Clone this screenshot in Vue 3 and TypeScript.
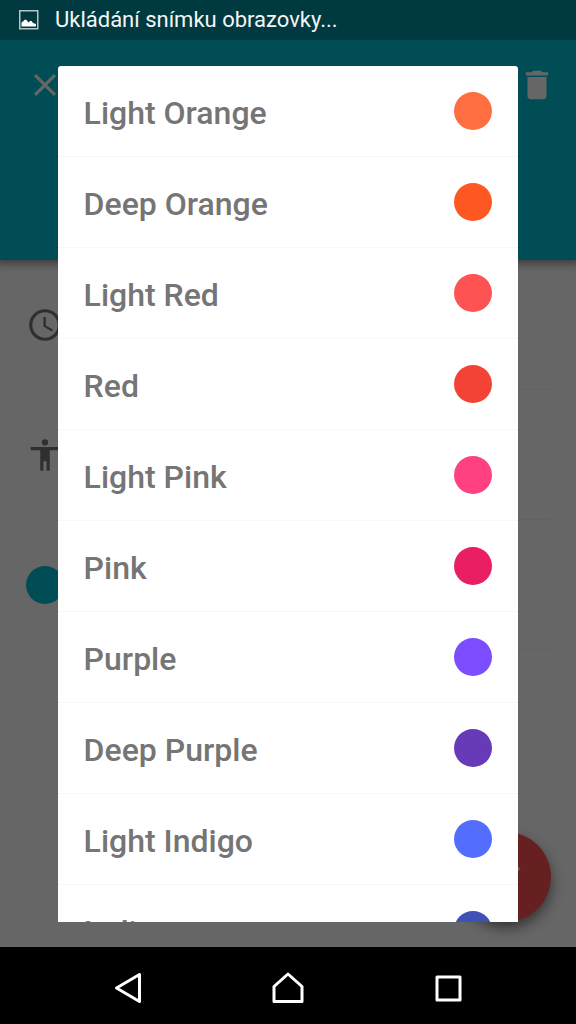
<script setup lang="ts">
import { ref } from 'vue'

interface EventColor {
  name: string
  hex: string
}

const colors: EventColor[] = [
  { name: 'Light Orange', hex: '#ff6e40' },
  { name: 'Deep Orange', hex: '#ff5722' },
  { name: 'Light Red', hex: '#ff5252' },
  { name: 'Red', hex: '#f44336' },
  { name: 'Light Pink', hex: '#ff4081' },
  { name: 'Pink', hex: '#e91e63' },
  { name: 'Purple', hex: '#7c4dff' },
  { name: 'Deep Purple', hex: '#673ab7' },
  { name: 'Light Indigo', hex: '#536dfe' },
  { name: 'Indigo', hex: '#3f51b5' },
]

const selected = ref<string>('')
</script>

<template>
  <div class="screen">
    <header class="status">
      <svg class="status-icon" viewBox="0 0 20 20" aria-hidden="true">
        <rect x="0.75" y="0.75" width="18" height="18" fill="none" stroke="#b4c6c8" stroke-width="1.5" />
        <path d="M2.500 16.500v-4l2-1.500 1.500-1.500 1.500.5 2 2.500 1.500-1.500 1.500 0 1.500 2 3 1v2.500z" fill="#fff" />
      </svg>
      <span>Ukládání snímku obrazovky...</span>
    </header>

    <div class="stage">
      <div class="toolbar">
        <button type="button" class="icon-button" aria-label="Close">
          <svg viewBox="0 0 24 24"><path d="M19 6.410L17.590 5 12 10.590 6.410 5 5 6.410 10.590 12 5 17.590 6.410 19 12 13.410 17.590 19 19 17.590 13.410 12z" /></svg>
        </button>
        <button type="button" class="icon-button" aria-label="Delete">
          <svg viewBox="0 0 24 24"><path d="M6 19c0 1.100.9 2 2 2h8c1.100 0 2-.9 2-2V7H6v12zM19 4h-3.500l-1-1h-5l-1 1H5v2h14V4z" /></svg>
        </button>
      </div>

      <main class="form">
        <div class="field">
          <svg viewBox="0 0 24 24"><path fill-rule="evenodd" d="M12 2a10 10 0 1 0 0 20 10 10 0 0 0 0-20zm0 18a8 8 0 1 1 0-16 8 8 0 0 1 0 16zM12.500 7H11v6l5.250 3.150.75-1.230-4.500-2.670z" /></svg>
          <span class="value"></span>
        </div>
        <div class="field">
          <svg viewBox="0 0 24 24"><path d="M12 2a2 2 0 1 1 0 4 2 2 0 0 1 0-4zm9 7h-6v13h-2v-6h-2v6H9V9H3V7h18v2z" /></svg>
          <span class="value"></span>
        </div>
        <div class="field">
          <span class="dot current"></span>
          <span class="value"></span>
        </div>
      </main>

      <button type="button" class="fab" aria-label="Save">
        <svg viewBox="0 0 24 24"><path d="M9 16.170L4.830 12l-1.420 1.410L9 19 21 7l-1.410-1.410z" /></svg>
      </button>

      <div class="overlay">
        <div class="dialog" role="dialog" aria-label="Color">
          <ul class="list">
            <li v-for="color in colors" :key="color.name">
              <button type="button" class="option" :aria-pressed="selected === color.name" @click="selected = color.name">
                <span class="name">{{ color.name }}</span>
                <span class="dot" :style="{ background: color.hex }"></span>
              </button>
            </li>
          </ul>
        </div>
      </div>
    </div>

    <nav class="system">
      <button type="button" aria-label="Back">
        <svg viewBox="0 0 38 38"><path d="M30.500 5.500v27L7.500 19z" /></svg>
      </button>
      <button type="button" aria-label="Home">
        <svg viewBox="0 0 38 38"><path d="M19 5L33 17.500V32.500H5V17.500z" /></svg>
      </button>
      <button type="button" aria-label="Recent apps">
        <svg viewBox="0 0 38 38"><rect x="8" y="8" width="23" height="23" /></svg>
      </button>
    </nav>
  </div>
</template>

<style>
body {
  margin: 0;
  background: #000;
}
</style>

<style scoped>
.screen {
  display: flex;
  flex-direction: column;
  height: 100vh;
  font-family: Roboto, "Noto Sans", sans-serif;
}

button {
  margin: 0;
  padding: 0;
  border: 0;
  background: none;
  font: inherit;
  color: inherit;
  cursor: pointer;
}

svg {
  display: block;
}

.status {
  display: flex;
  align-items: center;
  gap: 16px;
  height: 40px;
  flex: none;
  padding: 0 19px;
  background: #003a40;
  color: #f3f6f6;
  font-size: 22px;
  line-height: 40px;
}

.status-icon {
  width: 20px;
  height: 20px;
}

.stage {
  position: relative;
  flex: 1;
  min-height: 0;
  overflow: hidden;
  background: #fff;
}

.toolbar {
  display: flex;
  justify-content: space-between;
  align-items: flex-start;
  box-sizing: border-box;
  height: 220px;
  padding: 26px 20px 0 26px;
  background: #00c0d4;
  box-shadow: 0 0 8px 4px rgba(0, 0, 0, 0.4);
}

.icon-button svg {
  width: 38px;
  height: 38px;
  fill: #fff;
}

.form {
  padding: 0 25px 0 26px;
}

.field {
  display: flex;
  align-items: center;
  gap: 26px;
  height: 130px;
}

.field svg {
  width: 38px;
  height: 38px;
  fill: #757575;
}

.value {
  flex: 1;
  align-self: stretch;
  border-bottom: 1px solid #f5f5f5;
}

.dot {
  width: 38px;
  height: 38px;
  flex: none;
  border-radius: 50%;
}

.current {
  background: #00c0d4;
}

.fab {
  position: absolute;
  right: 25px;
  bottom: 25px;
  display: grid;
  place-items: center;
  width: 90px;
  height: 90px;
  border-radius: 50%;
  background: #ff5252;
  box-shadow: 0 6px 14px rgba(0, 0, 0, 0.5);
}

.fab svg {
  width: 38px;
  height: 38px;
  fill: #fff;
}

.overlay {
  position: absolute;
  inset: 0;
  display: flex;
  box-sizing: border-box;
  padding: 26px 10% 25px;
  background: rgba(0, 0, 0, 0.6);
}

.dialog {
  flex: 1;
  overflow: hidden;
  border-radius: 3px 3px 0 0;
  background: #fff;
}

.list {
  margin: 0;
  padding: 0;
  list-style: none;
}

.list li {
  border-bottom: 1px solid #f7f7f7;
}

.option {
  display: flex;
  align-items: center;
  justify-content: space-between;
  width: 100%;
  height: 90px;
  padding: 0 26px;
  color: #757575;
  font-size: 32px;
  font-weight: 500;
  line-height: 38px;
  text-align: left;
}

.name {
  padding-top: 3px;
}

.system {
  display: flex;
  justify-content: center;
  flex: none;
  box-sizing: border-box;
  height: 77px;
  padding-top: 5px;
  background: #000;
}

.system button {
  display: grid;
  place-items: center;
  width: 160px;
}

.system svg {
  width: 38px;
  height: 38px;
  fill: none;
  stroke: #fff;
  stroke-width: 3;
  stroke-linejoin: round;
}
</style>
